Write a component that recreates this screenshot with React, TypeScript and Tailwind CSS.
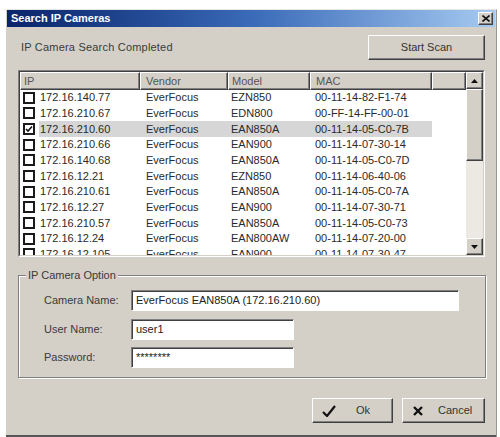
import React from "react";

type Cam = { ip: string; vendor: string; model: string; mac: string; checked?: boolean };

const cams: Cam[] = [
  { ip: "172.16.140.77", vendor: "EverFocus", model: "EZN850", mac: "00-11-14-82-F1-74" },
  { ip: "172.16.210.67", vendor: "EverFocus", model: "EDN800", mac: "00-FF-14-FF-00-01" },
  { ip: "172.16.210.60", vendor: "EverFocus", model: "EAN850A", mac: "00-11-14-05-C0-7B", checked: true },
  { ip: "172.16.210.66", vendor: "EverFocus", model: "EAN900", mac: "00-11-14-07-30-14" },
  { ip: "172.16.140.68", vendor: "EverFocus", model: "EAN850A", mac: "00-11-14-05-C0-7D" },
  { ip: "172.16.12.21", vendor: "EverFocus", model: "EZN850", mac: "00-11-14-06-40-06" },
  { ip: "172.16.210.61", vendor: "EverFocus", model: "EAN850A", mac: "00-11-14-05-C0-7A" },
  { ip: "172.16.12.27", vendor: "EverFocus", model: "EAN900", mac: "00-11-14-07-30-71" },
  { ip: "172.16.210.57", vendor: "EverFocus", model: "EAN850A", mac: "00-11-14-05-C0-73" },
  { ip: "172.16.12.24", vendor: "EverFocus", model: "EAN800AW", mac: "00-11-14-07-20-00" },
  { ip: "172.16.12.105", vendor: "EverFocus", model: "EAN900", mac: "00-11-14-07-30-47" },
];

// raised 3d edge used by buttons and scrollbar parts
const raised =
  "border border-t-white border-l-white border-b-[#404040] border-r-[#404040] shadow-[inset_-1px_-1px_0_#808080]";

function Checkbox({ checked }: { checked?: boolean }) {
  return (
    <div className="w-[12px] h-[12px] border-2 border-[#1a1a1a] bg-white flex items-center justify-center shrink-0">
      {checked && (
        <svg width="8" height="8" viewBox="0 0 8 8">
          <path d="M1 4 L3 6 L7 1.5" stroke="#111" strokeWidth="1.6" fill="none" />
        </svg>
      )}
    </div>
  );
}

function Arrow({ down }: { down?: boolean }) {
  return (
    <svg width="7" height="4" viewBox="0 0 7 4">
      <path d={down ? "M0 0 H7 L3.5 4 Z" : "M0 4 H7 L3.5 0 Z"} fill="#111" />
    </svg>
  );
}

function Field({ label, value, width }: { label: string; value: string; width: string }) {
  return (
    <div className="flex items-center h-[21px]">
      <div className="w-[87px] pl-[25px] box-content text-[#3a3a3a]">{label}</div>
      <div
        className={`${width} h-[21px] bg-white border border-t-[#808080] border-l-[#808080] border-b-white border-r-white shadow-[inset_1px_1px_0_#404040] flex items-center pl-[4px] text-[#222]`}
      >
        {value}
      </div>
    </div>
  );
}

export default function App() {
  return (
    <div
      className="w-[500px] h-[437px] bg-white pt-[9px] pl-[5px] pr-[3px] overflow-hidden text-[11px] leading-none"
      style={{ fontFamily: '"Liberation Sans", Arial, sans-serif' }}
    >
      <div className="h-[428px] bg-[#d4d0c8] border-l border-t border-l-white border-t-[#e8e6e0] border-r border-r-[#9a9890] flex flex-col">
        {/* title bar */}
        <div className="h-[17px] mx-[1px] bg-gradient-to-r from-[#0a246a] via-[#3a6ab8] to-[#a6caf0] flex items-center justify-between pl-[4px] pr-[2px]">
          <span className="text-white font-bold text-[11px]">Search IP Cameras</span>
          <div className={`w-[15px] h-[13px] bg-[#d4d0c8] ${raised} flex items-center justify-center`}>
            <svg width="8" height="7" viewBox="0 0 8 7">
              <path d="M0.5 0.5 L7.5 6.5 M7.5 0.5 L0.5 6.5" stroke="#111" strokeWidth="1.6" />
            </svg>
          </div>
        </div>

        {/* scan status */}
        <div className="mt-[8px] h-[25px] flex items-center justify-between pl-[15px] pr-[11px]">
          <span className="text-[#3a3a3a] tracking-[0.2px]">IP Camera Search Completed</span>
          <button className={`w-[117px] h-[25px] bg-[#d4d0c8] ${raised} text-[#333]`}>Start Scan</button>
        </div>

        {/* camera list */}
        <div className="mt-[10px] ml-[12px] mr-[11px] h-[187px] border border-t-[#808080] border-l-[#808080] border-b-white border-r-white">
          <div className="h-full border border-t-[#404040] border-l-[#404040] border-b-[#d4d0c8] border-r-[#d4d0c8] bg-white flex overflow-hidden">
            <div className="flex-1 flex flex-col overflow-hidden">
              <div className="h-[18px] shrink-0 flex text-[#555]">
                <div className={`w-[120px] bg-[#d4d0c8] ${raised} flex items-center pl-[3px]`}>IP</div>
                <div className={`w-[88px] bg-[#d4d0c8] ${raised} flex items-center pl-[5px]`}>Vendor</div>
                <div className={`w-[82px] bg-[#d4d0c8] ${raised} flex items-center pl-[3px]`}>Model</div>
                <div className={`w-[122px] bg-[#d4d0c8] ${raised} flex items-center pl-[5px]`}>MAC</div>
                <div className={`flex-1 bg-[#d4d0c8] ${raised}`} />
              </div>
              {cams.map((c) => (
                <div key={c.ip} className="h-[15.67px] shrink-0 flex items-center text-[#2a2a2a]">
                  <div className="w-[19px] pl-[3px] flex items-center">
                    <Checkbox checked={c.checked} />
                  </div>
                  <div className={`flex items-center h-full ${c.checked ? "bg-[#d6d6d6]" : ""}`}>
                    <div className="w-[101px] pl-[1px]">{c.ip}</div>
                    <div className="w-[88px] pl-[6px]">{c.vendor}</div>
                    <div className="w-[82px] pl-[3px]">{c.model}</div>
                    <div className="w-[122px] pl-[5px]">{c.mac}</div>
                  </div>
                </div>
              ))}
            </div>
            {/* scrollbar */}
            <div className="w-[17px] shrink-0 flex flex-col bg-[#ece9e3]">
              <div className={`h-[17px] bg-[#d4d0c8] ${raised} flex items-center justify-center`}>
                <Arrow />
              </div>
              <div className={`h-[72px] bg-[#d4d0c8] ${raised}`} />
              <div className="flex-1" />
              <div className={`h-[17px] bg-[#d4d0c8] ${raised} flex items-center justify-center`}>
                <Arrow down />
              </div>
            </div>
          </div>
        </div>

        {/* option group */}
        <div className="relative mt-[18px] ml-[12px] mr-[10px] h-[103px] border border-[#808080] shadow-[1px_1px_0_white,inset_1px_1px_0_white]">
          <span className="absolute -top-[6px] left-[7px] px-[2px] bg-[#d4d0c8] text-[#3a3a3a]">IP Camera Option</span>
          <div className="pt-[14px] flex flex-col gap-[7.5px]">
            <Field label="Camera Name:" value="EverFocus EAN850A (172.16.210.60)" width="w-[328px]" />
            <Field label="User Name:" value="user1" width="w-[163px]" />
            <Field label="Password:" value="********" width="w-[163px]" />
          </div>
        </div>

        {/* buttons */}
        <div className="mt-[20px] h-[25px] flex justify-end gap-[9px] pr-[11px]">
          <button className={`w-[81px] h-[25px] bg-[#d4d0c8] ${raised} flex items-center pl-[9px] text-[#333]`}>
            <svg width="14" height="12" viewBox="0 0 14 12">
              <path d="M1 7 L5 11 L13 1" stroke="#111" strokeWidth="2.2" fill="none" />
            </svg>
            <span className="ml-[20px]">Ok</span>
          </button>
          <button className={`w-[83px] h-[25px] bg-[#d4d0c8] ${raised} flex items-center pl-[10px] text-[#333]`}>
            <svg width="10" height="10" viewBox="0 0 10 10">
              <path d="M1 1 L9 9 M9 1 L1 9" stroke="#111" strokeWidth="2.4" />
            </svg>
            <span className="ml-[15px]">Cancel</span>
          </button>
        </div>
        <div className="flex-1" />
        <div className="h-[2px] bg-[#555]" />
      </div>
    </div>
  );
}
